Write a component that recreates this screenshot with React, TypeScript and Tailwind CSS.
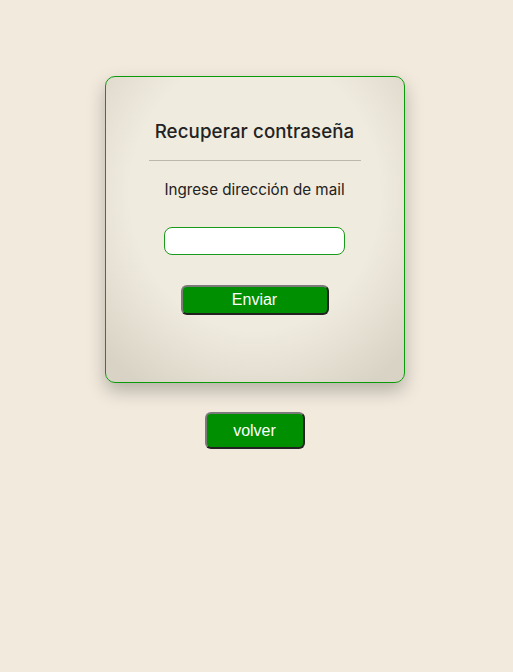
export default function App() {
  return (
    <div className="min-h-[672px] bg-[#f2eadd] flex flex-col items-center pt-[76px] pr-[4px] font-['Inter',sans-serif]">
      <div className="w-[300px] h-[307px] rounded-[10px] border border-[#0a9a0a] bg-[radial-gradient(ellipse_70%_75%_at_50%_38%,#f0ebdf_60%,#d9d3c5_100%)] shadow-[0_8px_18px_rgba(0,0,0,0.25)] flex flex-col items-center pt-[43px]">
        <h1 className="text-[18.7px] font-medium text-[#222] leading-[24px] tracking-[0.1px]">Recuperar contraseña</h1>
        <div className="w-[212px] h-px bg-[#bcb8ae] mt-[16px]" />
        <p className="text-[15.2px] text-[#222] leading-[20px] mt-[19px]">Ingrese dirección de mail</p>
        <input
          type="text"
          className="mt-[27px] w-[181px] h-[28px] rounded-[8px] border border-[#1a9a1a] bg-white outline-none px-2"
        />
        <button className="mt-[30px] w-[148px] h-[30px] rounded-[6px] bg-[#008f00] text-white text-[16px] font-['Liberation_Sans',sans-serif] border-2 border-t-[#7a7a7a] border-l-[#7a7a7a] border-r-[#222] border-b-[#222] leading-none">
          Enviar
        </button>
      </div>
      <button className="mt-[29px] w-[100px] h-[37px] rounded-[6px] bg-[#008f00] text-white text-[16px] font-['Liberation_Sans',sans-serif] border-2 border-t-[#7a7a7a] border-l-[#7a7a7a] border-r-[#222] border-b-[#222] leading-none">
        volver
      </button>
    </div>
  );
}
